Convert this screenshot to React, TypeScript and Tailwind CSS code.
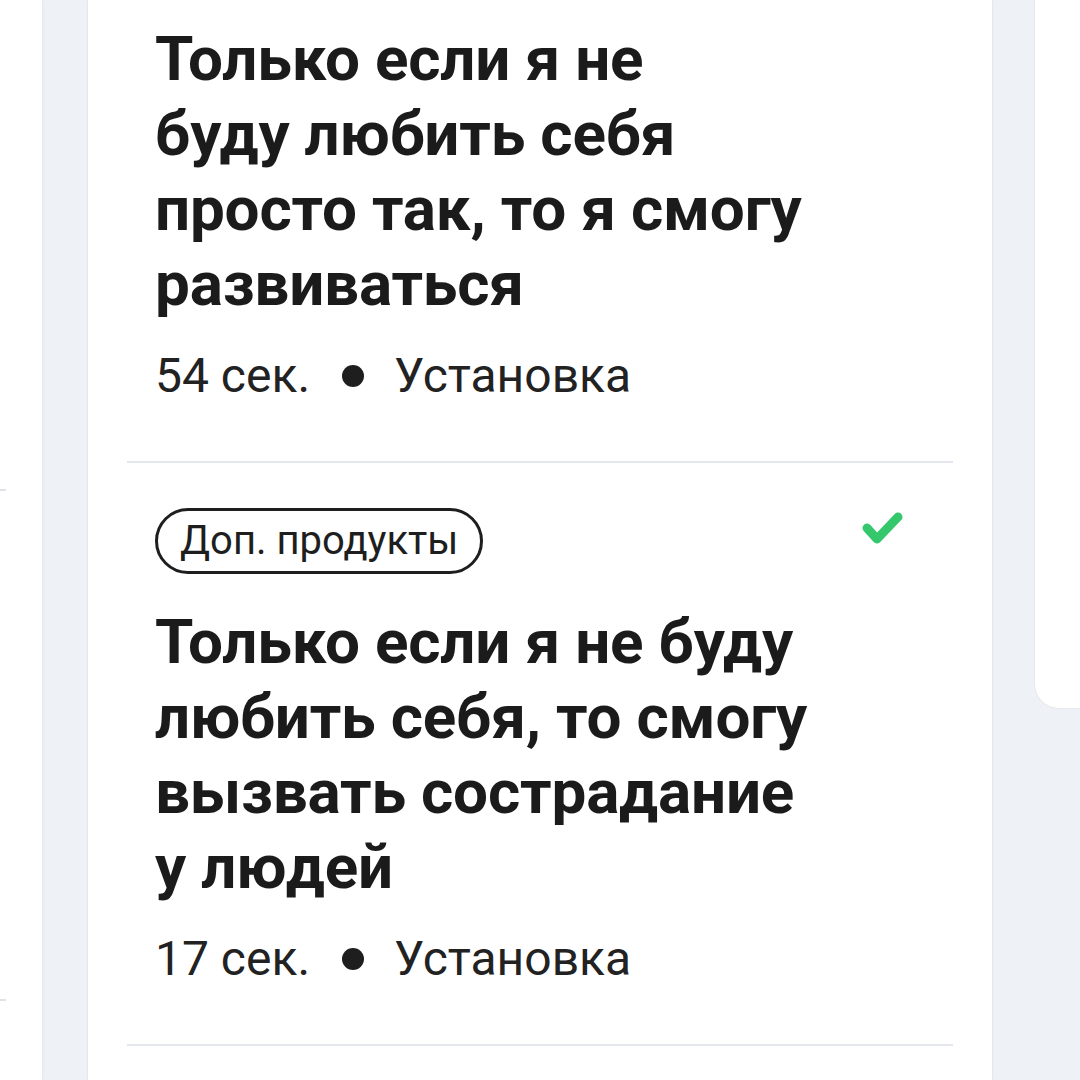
export default function App() {
  const title1 = ["Только если я не", "буду любить себя", "просто так, то я смогу", "развиваться"];
  const title2 = ["Только если я не буду", "любить себя, то смогу", "вызвать сострадание", "у людей"];
  return (
    <div className="w-[1080px] h-[1080px] overflow-hidden bg-[#eef2f7] flex font-['Roboto',sans-serif]">
      <div className="w-[42px] h-full bg-white shadow-[1px_0_3px_rgba(0,0,0,0.05)] flex flex-col shrink-0">
        <div className="h-[489px]" />
        <div className="w-[6px] h-[2px] bg-[#dfe2e8]" />
        <div className="h-[508px]" />
        <div className="w-[6px] h-[2px] bg-[#dfe2e8]" />
      </div>
      <div className="ml-[46px] w-[904px] h-full bg-white shadow-[0_0_2px_rgba(0,0,0,0.12)] px-[39px] flex flex-col shrink-0">
        <div className="pl-[28px] pt-[21px]">
          <div className="text-[62px] leading-[75px] font-bold text-[#1b1b1b] tracking-[-0.2px]">
            {title1.map((l) => (
              <div key={l} className="whitespace-nowrap">{l}</div>
            ))}
          </div>
          <div className="mt-[27px] flex items-center text-[48px] leading-[56px] text-[#222222] whitespace-nowrap">
            <span>54 сек.</span>
            <span className="ml-[32px] mr-[30px] w-[22px] h-[22px] shrink-0 rounded-full bg-[#1e1e1e]" />
            <span>Установка</span>
          </div>
        </div>
        <div className="mt-[57px] h-[2px] bg-[#e4e7ee]" />
        <div className="pt-[45px] pl-[28px]">
          <div className="flex justify-between items-start pr-[48px]">
            <div className="h-[66px] border-[3px] border-[#1e1e1e] rounded-full pl-[22px] pr-[22px] flex items-center text-[40px] text-[#1e1e1e] whitespace-nowrap">
              Доп. продукты
            </div>
            <svg width="45" height="36" viewBox="0 0 45 36" className="mt-[2px]">
              <path d="M7 18 L17 29 L38 7" fill="none" stroke="#35c76b" strokeWidth="9" strokeLinecap="round" strokeLinejoin="round" />
            </svg>
          </div>
          <div className="mt-[30px] text-[62px] leading-[75px] font-bold text-[#1b1b1b] tracking-[-0.2px]">
            {title2.map((l) => (
              <div key={l} className="whitespace-nowrap">{l}</div>
            ))}
          </div>
          <div className="mt-[27px] flex items-center text-[48px] leading-[56px] text-[#222222] whitespace-nowrap">
            <span>17 сек.</span>
            <span className="ml-[32px] mr-[30px] w-[22px] h-[22px] shrink-0 rounded-full bg-[#1e1e1e]" />
            <span>Установка</span>
          </div>
        </div>
        <div className="mt-[57px] h-[2px] bg-[#e4e7ee]" />
      </div>
      <div className="ml-[43px] flex-1 h-[708px] bg-white rounded-bl-[24px] shadow-[0_0_2px_rgba(0,0,0,0.12)]" />
    </div>
  );
}
